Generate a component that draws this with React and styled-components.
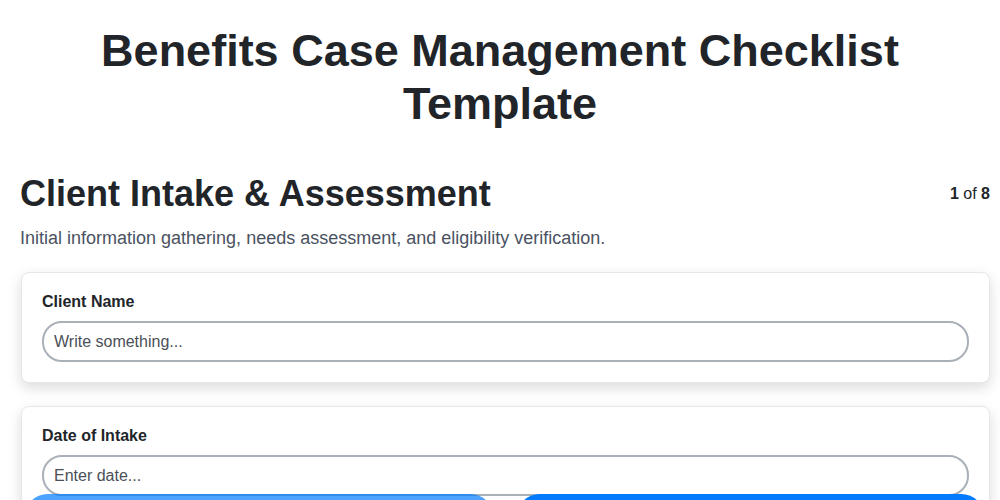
import React from "react";
import styled, { createGlobalStyle } from "styled-components";

const GlobalStyle = createGlobalStyle`
  html, body {
    margin: 0;
    padding: 0;
    background: #ffffff;
    font-family: "Liberation Sans", Arial, sans-serif;
    color: #212529;
  }
  * {
    box-sizing: border-box;
  }
`;

const fields = [
  { label: "Client Name", placeholder: "Write something..." },
  { label: "Date of Intake", placeholder: "Enter date..." },
  { label: "Case Worker", placeholder: "Write something..." },
];

const App = () => {
  return (
    <Page>
      <GlobalStyle />
      <Title>Benefits Case Management Checklist Template</Title>

      <SectionHeader>
        <SectionTitle>Client Intake &amp; Assessment</SectionTitle>
        <Counter>
          <b>1</b> of <b>8</b>
        </Counter>
      </SectionHeader>
      <Description>
        Initial information gathering, needs assessment, and eligibility
        verification.
      </Description>

      <FieldList>
        {fields.map((f) => (
          <Card key={f.label}>
            <Label>{f.label}</Label>
            <Input placeholder={f.placeholder} />
          </Card>
        ))}
      </FieldList>

      <NavBar>
        <NavButton disabled>Previous</NavButton>
        <NavButton>Next</NavButton>
      </NavBar>
    </Page>
  );
};

const Page = styled.div`
  padding: 24px 10px 120px 20px;
`;

const Title = styled.h1`
  margin: 0 -10px 40px -20px;
  padding: 0 90px;
  text-align: center;
  font-size: 45px;
  line-height: 53px;
  font-weight: 700;
  color: #212529;
`;

const SectionHeader = styled.div`
  display: flex;
  justify-content: space-between;
  align-items: center;
`;

const SectionTitle = styled.h2`
  margin: 0;
  font-size: 36px;
  line-height: 48px;
  font-weight: 700;
  color: #212529;
`;

const Counter = styled.div`
  font-size: 16px;
  color: #212529;

  b {
    font-weight: 700;
  }
`;

const Description = styled.p`
  margin: 8px 0 22px;
  font-size: 18px;
  line-height: 24px;
  color: #4a5262;
`;

const FieldList = styled.div`
  display: flex;
  flex-direction: column;
  gap: 23px;
  margin-left: 1px;
`;

const Card = styled.div`
  background: #ffffff;
  border: 1px solid #e6e7eb;
  border-radius: 8px;
  padding: 20px;
  box-shadow: 0 5px 14px rgba(0, 0, 0, 0.14);
`;

const Label = styled.div`
  font-size: 16px;
  line-height: 18px;
  font-weight: 700;
  color: #212529;
  margin-bottom: 10px;
`;

const Input = styled.input`
  display: block;
  width: 100%;
  height: 41px;
  border: 2px solid #a9b0b8;
  border-radius: 20px;
  padding: 0 10px;
  font-family: "Liberation Sans", Arial, sans-serif;
  font-size: 16px;
  color: #212529;
  background: #ffffff;
  outline: none;

  &::placeholder {
    color: #4a4f57;
  }
`;

const NavBar = styled.div`
  position: fixed;
  left: 20px;
  right: 10px;
  top: calc(100vh - 6px);
  display: flex;
  gap: 22px;
  padding: 0 5px 0 4px;
`;

const NavButton = styled.button`
  flex: 1;
  height: 48px;
  border: none;
  border-radius: 24px;
  background: #007bff;
  color: #ffffff;
  font-family: "Liberation Sans", Arial, sans-serif;
  font-size: 16px;
  font-weight: 700;
  opacity: ${(p) => (p.disabled ? 0.7 : 1)};
`;

export default App;
